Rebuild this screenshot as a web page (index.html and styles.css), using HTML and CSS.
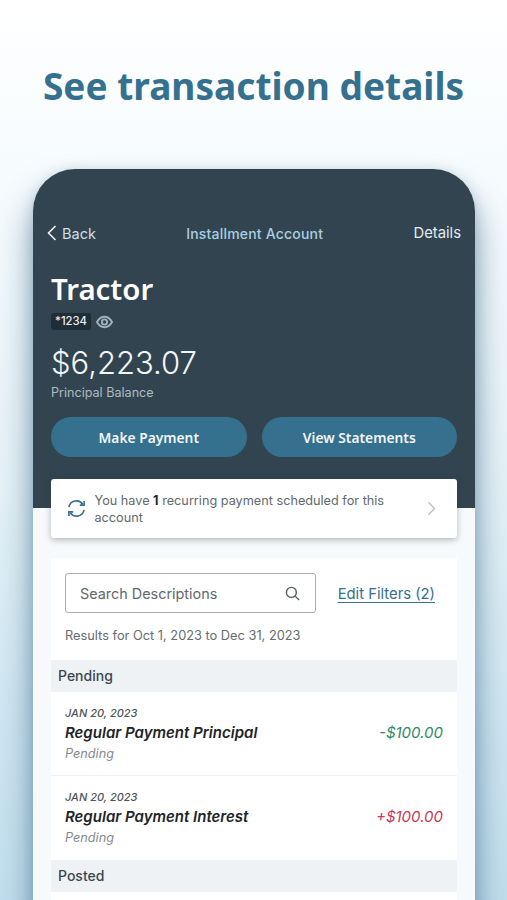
FILE: index.html
```html
<!DOCTYPE html>
<html lang="en">
<head>
<meta charset="utf-8">
<title>See transaction details</title>
<link rel="stylesheet" href="styles.css">
</head>
<body>
<main class="screen">
  <h1 class="headline">See transaction details</h1>
  <section class="phone">
    <header class="hero">
      <nav class="topbar">
        <a class="back">
          <svg class="back-icon" viewBox="0 0 10 16"><path d="M8.500 1 1.500 8l7 7"/></svg>
          Back
        </a>
        <span class="topbar-title">Installment Account</span>
        <a class="details">Details</a>
      </nav>
      <h2 class="account-name">Tractor</h2>
      <div class="account-id">
        <span class="mask">*1234</span>
        <svg class="eye" viewBox="0 0 18 14"><path d="M1 7c2-3.600 4.800-5.500 8-5.500s6 1.900 8 5.500c-2 3.600-4.800 5.500-8 5.500S3 10.600 1 7Z"/><circle cx="9" cy="7" r="2.800"/></svg>
      </div>
      <div class="balance">$6,223.07</div>
      <div class="balance-label">Principal Balance</div>
      <div class="actions">
        <button class="pill">Make Payment</button>
        <button class="pill">View Statements</button>
      </div>
    </header>
    <div class="content">
      <a class="notice">
        <svg class="sync" viewBox="0 0 20 20"><path d="M2 8.500A8 8 0 0 1 16.500 5.500M18 11.500A8 8 0 0 1 3.500 14.500"/><path d="M18 2v4.500h-4.500M2 18v-4.500h4.500"/></svg>
        <span class="notice-text">You have <b>1</b> recurring payment scheduled for this account</span>
        <svg class="chevron" viewBox="0 0 10 16"><path d="M1.500 1l7 7-7 7"/></svg>
      </a>
      <section class="card">
        <div class="filters">
          <div class="search">
            <span>Search Descriptions</span>
            <svg class="search-icon" viewBox="0 0 16 16"><circle cx="6.800" cy="6.800" r="5.300"/><path d="m10.800 10.800 4.200 4.200"/></svg>
          </div>
          <a class="edit">Edit Filters (2)</a>
        </div>
        <p class="results">Results for Oct 1, 2023 to Dec 31, 2023</p>
        <div class="group">Pending</div>
        <article class="txn">
          <div class="txn-main">
            <div class="txn-date">JAN 20, 2023</div>
            <div class="txn-name">Regular Payment Principal</div>
            <div class="txn-status">Pending</div>
          </div>
          <div class="amount debit">-$100.00</div>
        </article>
        <article class="txn">
          <div class="txn-main">
            <div class="txn-date">JAN 20, 2023</div>
            <div class="txn-name">Regular Payment Interest</div>
            <div class="txn-status">Pending</div>
          </div>
          <div class="amount credit">+$100.00</div>
        </article>
        <div class="group">Posted</div>
        <div class="txn-blank"></div>
      </section>
    </div>
  </section>
</main>
</body>
</html>
```
FILE: styles.css
```css
* { box-sizing: border-box; }
html, body { margin: 0; padding: 0; }
body { width: 507px; height: 900px; overflow: hidden; font-family: Inter, "Noto Sans", sans-serif; }
.screen {
  height: 900px;
  overflow: hidden;
  padding: 0 32px 0 33px;
  background: linear-gradient(180deg, #ffffff 0%, #f6fbfd 20%, #e4f1f7 55%, #cfe6f1 80%, #c2deed 100%);
}
.headline {
  height: 169px;
  margin: 0 -32px 0 -33px;
  padding-top: 63px;
  text-align: center;
  font: 700 37.100px/46px "Noto Sans", sans-serif;
  color: #35708f;
  white-space: nowrap;
}
.phone {
  height: 760px;
  border-radius: 42px 42px 0 0;
  background: #f7fafc;
  box-shadow: 0 22px 32px rgba(40, 90, 125, 0.6), 0 0 12px rgba(40, 90, 125, 0.15);
  overflow: hidden;
}
.hero {
  height: 339px;
  padding: 55px 18px 0;
  background: #32444f;
  color: #fff;
}
.topbar {
  display: flex;
  align-items: center;
  justify-content: space-between;
  margin: 0 -4px;
  height: 18px;
  font-size: 14.500px;
  color: #e4ecf0;
}
.back { display: flex; align-items: center; gap: 5px; color: #d3dee4; }
.back-icon { width: 10px; height: 16px; fill: none; stroke: #eef3f5; stroke-width: 1.600; }
.topbar-title { font-weight: 500; font-size: 14px; letter-spacing: 0.2px; color: #a9d0e2; }
.details { font-size: 14.800px; }
.account-name { margin: 28px 0 0; font: 600 29.400px/38px "Noto Sans", sans-serif; color: #fff; }
.account-id { display: flex; align-items: center; gap: 5px; margin-top: 5px; height: 17px; }
.mask { padding: 0 4px; height: 17px; font-size: 11.300px; font-weight: 500; line-height: 17px; border-radius: 3px; background: #1f2d36; color: #e8eef1; }
.eye { width: 17px; height: 14px; fill: none; stroke: #a3b3bd; stroke-width: 2; }
.balance { margin-top: 14px; font-size: 31px; line-height: 38px; font-weight: 300; color: #f3f6f8; }
.balance-label { font-size: 12.600px; line-height: 16px; margin-top: 3px; color: #aebcc4; }
.actions { display: flex; gap: 15px; margin-top: 16px; }
.pill {
  flex: 1;
  height: 40px;
  border: 0;
  border-radius: 20px;
  background: #35708f;
  color: #f0f6f9;
  font: 600 13.800px/40px "Noto Sans", sans-serif;
}
.content { padding: 0 18px; margin-top: -29px; }
.notice {
  position: relative;
  display: flex;
  align-items: center;
  height: 59px;
  padding: 0 21px 0 16px;
  background: #fff;
  border-radius: 3px;
  box-shadow: 0 2px 6px rgba(40, 60, 75, 0.35);
}
.sync { width: 19px; height: 19px; flex: none; fill: none; stroke: #35708f; stroke-width: 1.700; margin-right: 8.500px; }
.notice-text { flex: 1; font-size: 12.700px; line-height: 17px; color: #62696e; padding-right: 30px; }
.notice-text b { color: #1e2528; font-weight: 700; }
.chevron { width: 9px; height: 15px; flex: none; fill: none; stroke: #b9bfc3; stroke-width: 1.400; }
.card { margin-top: 20px; background: #fff; }
.filters { display: flex; align-items: center; justify-content: space-between; padding: 15px 22px 0 14px; }
.search {
  display: flex;
  align-items: center;
  justify-content: space-between;
  width: 250.500px;
  height: 40px;
  padding: 0 15px 0 14px;
  border: 1px solid #a9aeb1;
  border-radius: 3px;
  font-size: 14.400px;
  color: #61686d;
}
.search-icon { width: 15px; height: 15px; fill: none; stroke: #585f64; stroke-width: 1.500; }
.edit { padding-top: 2px; font-size: 14.800px; color: #35708f; text-decoration: underline; text-underline-offset: 3px; }
.results { margin: 15px 0 0 14px; height: 32px; font-size: 12.800px; line-height: 16px; color: #666c70; }
.group { height: 32px; padding-left: 7px; background: #eef2f5; font-size: 14px; font-weight: 500; line-height: 32px; color: #384650; }
.txn {
  display: flex;
  align-items: center;
  justify-content: space-between;
  height: 84px;
  padding: 0 14px;
  border-bottom: 1px solid #f0f3f5;
  font-style: italic;
}
.txn:last-of-type { border-bottom-color: #fff; }
.txn-main { margin-top: 2px; }
.txn-date { font-size: 11px; line-height: 14px; font-weight: 500; color: #4e5357; }
.txn-name { margin-top: 3px; font-size: 15px; line-height: 20px; font-weight: 600; color: #202427; }
.txn-status { margin-top: 2px; font-size: 12.700px; line-height: 18px; color: #85898c; }
.amount { font-size: 15px; line-height: 20px; margin-top: -2px; }
.debit { color: #2f8a66; }
.credit { color: #c9375a; }
.txn-blank { height: 60px; background: #fff; }
```
